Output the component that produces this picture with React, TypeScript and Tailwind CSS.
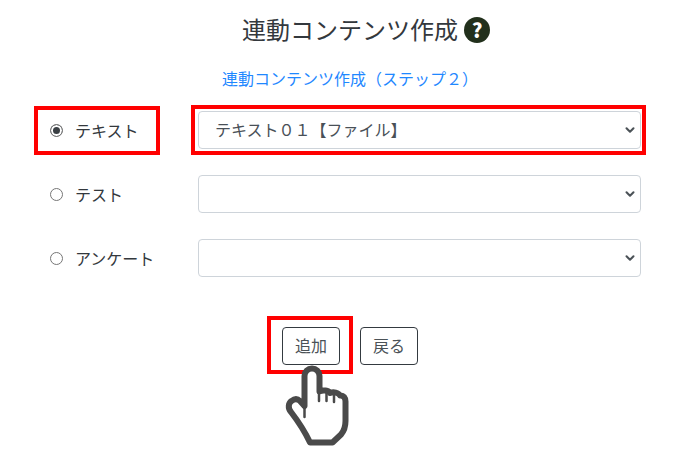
import { ChevronDown } from 'lucide-react';

const font = { fontFamily: '"Noto Sans CJK JP", "Noto Sans", sans-serif' };

const rows = [
  { label: 'テキスト', value: 'テキスト０１【ファイル】', checked: true },
  { label: 'テスト', value: '', checked: false },
  { label: 'アンケート', value: '', checked: false },
];

function HandIcon() {
  return (
    <svg
      className="absolute left-[284px] top-[364px]"
      width="68"
      height="86"
      viewBox="284 364 68 86"
      fill="none"
    >
      <path
        d="M304.500 376a7.500 7.500 0 0 1 15 0V391.500C323 389.500 328.500 390.500 330 393C333.500 391.500 338.500 392.500 340 395.500C343.500 395 345.500 398 345.500 401.500V421C345.500 427 344 431 341 434.500L332.500 442.500H310C306 434 301 425 291 412C287.500 408 288.500 403 291.500 401C294.500 398.500 297.500 398.500 300 401L304.500 406Z"
        fill="#ffffff"
        stroke="#4a4a4a"
        strokeWidth="6"
        strokeLinejoin="round"
      />
      <path
        d="M319 392V401M326.500 393V401M334 394V402M304.500 406V417"
        stroke="#4a4a4a"
        strokeWidth="2.500"
        strokeLinecap="round"
      />
    </svg>
  );
}

export default function App() {
  return (
    <div className="relative w-[700px] h-[462px] bg-white overflow-hidden text-[#33383d]" style={font}>
      <div className="pt-[11px] flex justify-center">
        <h1 className="relative text-2xl leading-[36px] font-normal">
          連動コンテンツ作成
          <span className="absolute left-[222px] top-[6px] w-[26px] h-[26px] rounded-full bg-[#22301c] text-white flex items-center justify-center text-[20px] font-black leading-none">
            ?
          </span>
        </h1>
      </div>

      <div className="mt-[19px] text-center">
        <a href="#" className="text-base leading-6 text-[#1f88ff]">
          連動コンテンツ作成（ステップ２）
        </a>
      </div>

      <div className="mt-[21px] pl-[50px] pr-[59px] flex flex-col gap-[26px]">
        {rows.map((row) => (
          <div key={row.label} className="flex items-center h-[38px]">
            <label className="w-[148px] flex items-center">
              <input
                type="radio"
                name="kind"
                defaultChecked={row.checked}
                className="appearance-none w-[13px] h-[13px] rounded-full border border-[#767676] shadow-[inset_0_0_0_2px_#ffffff] checked:bg-[#3a3f44]"
              />
              <span className="ml-[12px] text-base">{row.label}</span>
            </label>
            <div className="relative flex-1">
              <select
                defaultValue={row.value}
                className="appearance-none w-full h-[38px] pl-4 pr-8 pb-[2px] bg-white border border-[#ced4da] rounded text-base text-[#495057]"
              >
                <option value={row.value}>{row.value}</option>
              </select>
              <ChevronDown
                className="absolute right-[4px] top-[12px] text-[#4b5257] pointer-events-none"
                size={14}
                strokeWidth={3.5}
              />
            </div>
          </div>
        ))}
      </div>

      <div className="mt-[50px] flex justify-center gap-5">
        <button className="w-[58px] h-[38px] pb-[2px] border border-[#343a40] rounded text-base text-[#4b5257]">追加</button>
        <button className="w-[58px] h-[38px] pb-[2px] border border-[#343a40] rounded text-base text-[#4b5257]">戻る</button>
      </div>

      {/* red annotation frames */}
      <div className="absolute left-[34px] top-[106px] w-[126px] h-[49px] border-4 border-[#ff0000]" />
      <div className="absolute left-[191px] top-[105px] w-[455px] h-[50px] border-4 border-[#ff0000]" />
      <div className="absolute left-[267px] top-[316px] w-[86px] h-[58px] border-4 border-[#ff0000]" />
      <HandIcon />
    </div>
  );
}
